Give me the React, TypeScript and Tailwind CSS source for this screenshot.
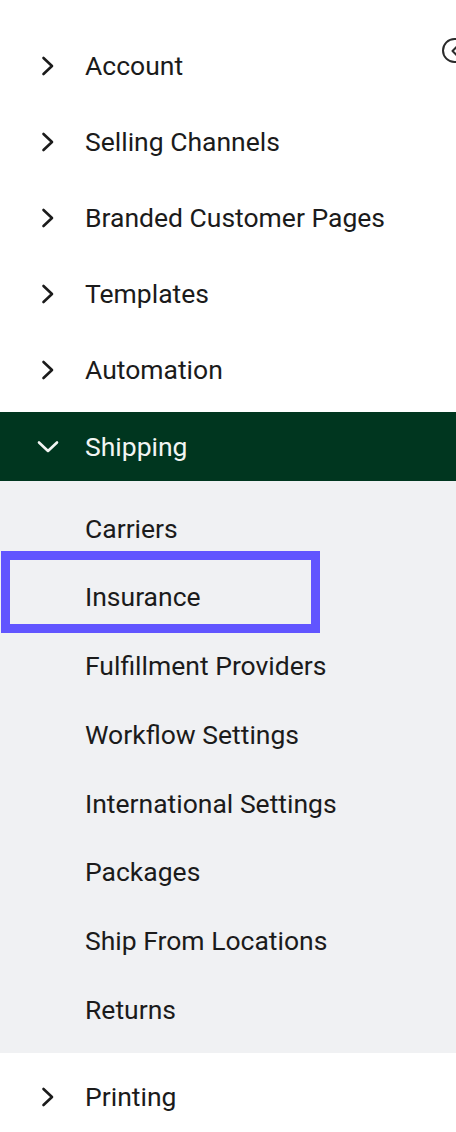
const topItems = ['Account', 'Selling Channels', 'Branded Customer Pages', 'Templates', 'Automation'];
const shippingItems = [
  'Carriers',
  'Insurance',
  'Fulfillment Providers',
  'Workflow Settings',
  'International Settings',
  'Packages',
  'Ship From Locations',
  'Returns',
];

const ChevronRight = () => (
  <svg width="14" height="20" viewBox="0 0 14 20" fill="none" stroke="currentColor" strokeWidth="2.6" strokeLinecap="round" strokeLinejoin="round">
    <path d="M2.5 2 L11 10 L2.5 18" />
  </svg>
);

const ChevronDown = () => (
  <svg width="22" height="14" viewBox="0 0 22 14" fill="none" stroke="currentColor" strokeWidth="2.6" strokeLinecap="round" strokeLinejoin="round">
    <path d="M2 2.5 L11 11 L20 2.5" />
  </svg>
);

const NavRow = ({ label }: { label: string }) => (
  <div className="flex items-center h-[68px] text-[#1b1b1b]">
    <span className="w-[85px] flex pl-[41px]">
      <ChevronRight />
    </span>
    <span>{label}</span>
  </div>
);

export default function App() {
  return (
    <div className="relative w-[456px] h-[1132px] overflow-hidden bg-white text-[26.5px] font-['Roboto',sans-serif]">
      {/* collapse button, cut off at the edge */}
      <button className="absolute left-[442px] top-[38px] w-[25px] h-[25px] rounded-full border-2 border-[#2b2b2b] flex items-center justify-center text-[#2b2b2b]">
        <svg width="10" height="12" viewBox="0 0 10 12" fill="none" stroke="currentColor" strokeWidth="2" strokeLinecap="round" strokeLinejoin="round">
          <path d="M7 1.5 L2.5 6 L7 10.5" />
        </svg>
      </button>

      <nav className="flex flex-col gap-[8px] pt-[32px]">
        {topItems.map((item) => (
          <NavRow key={item} label={item} />
        ))}

        <div>
          <div className="flex items-center h-[69px] bg-[#00361f] text-[#f2f5f3]">
            <span className="w-[85px] flex pl-[37px]">
              <ChevronDown />
            </span>
            <span>Shipping</span>
          </div>
          <div className="relative bg-[#f0f1f3] pt-[13px] pb-[9px]">
            {shippingItems.map((item) => (
              <div key={item} className="flex items-center h-[68.75px] pl-[85px] text-[#1b1b1b]">
                {item}
              </div>
            ))}
            {/* highlight around Insurance */}
            <div className="absolute left-[1px] top-[70px] w-[319px] h-[82px] border-[9px] border-[#6155ff] pointer-events-none" />
          </div>
        </div>

        <div className="mt-[2px]">
          <NavRow label="Printing" />
        </div>
      </nav>
    </div>
  );
}
